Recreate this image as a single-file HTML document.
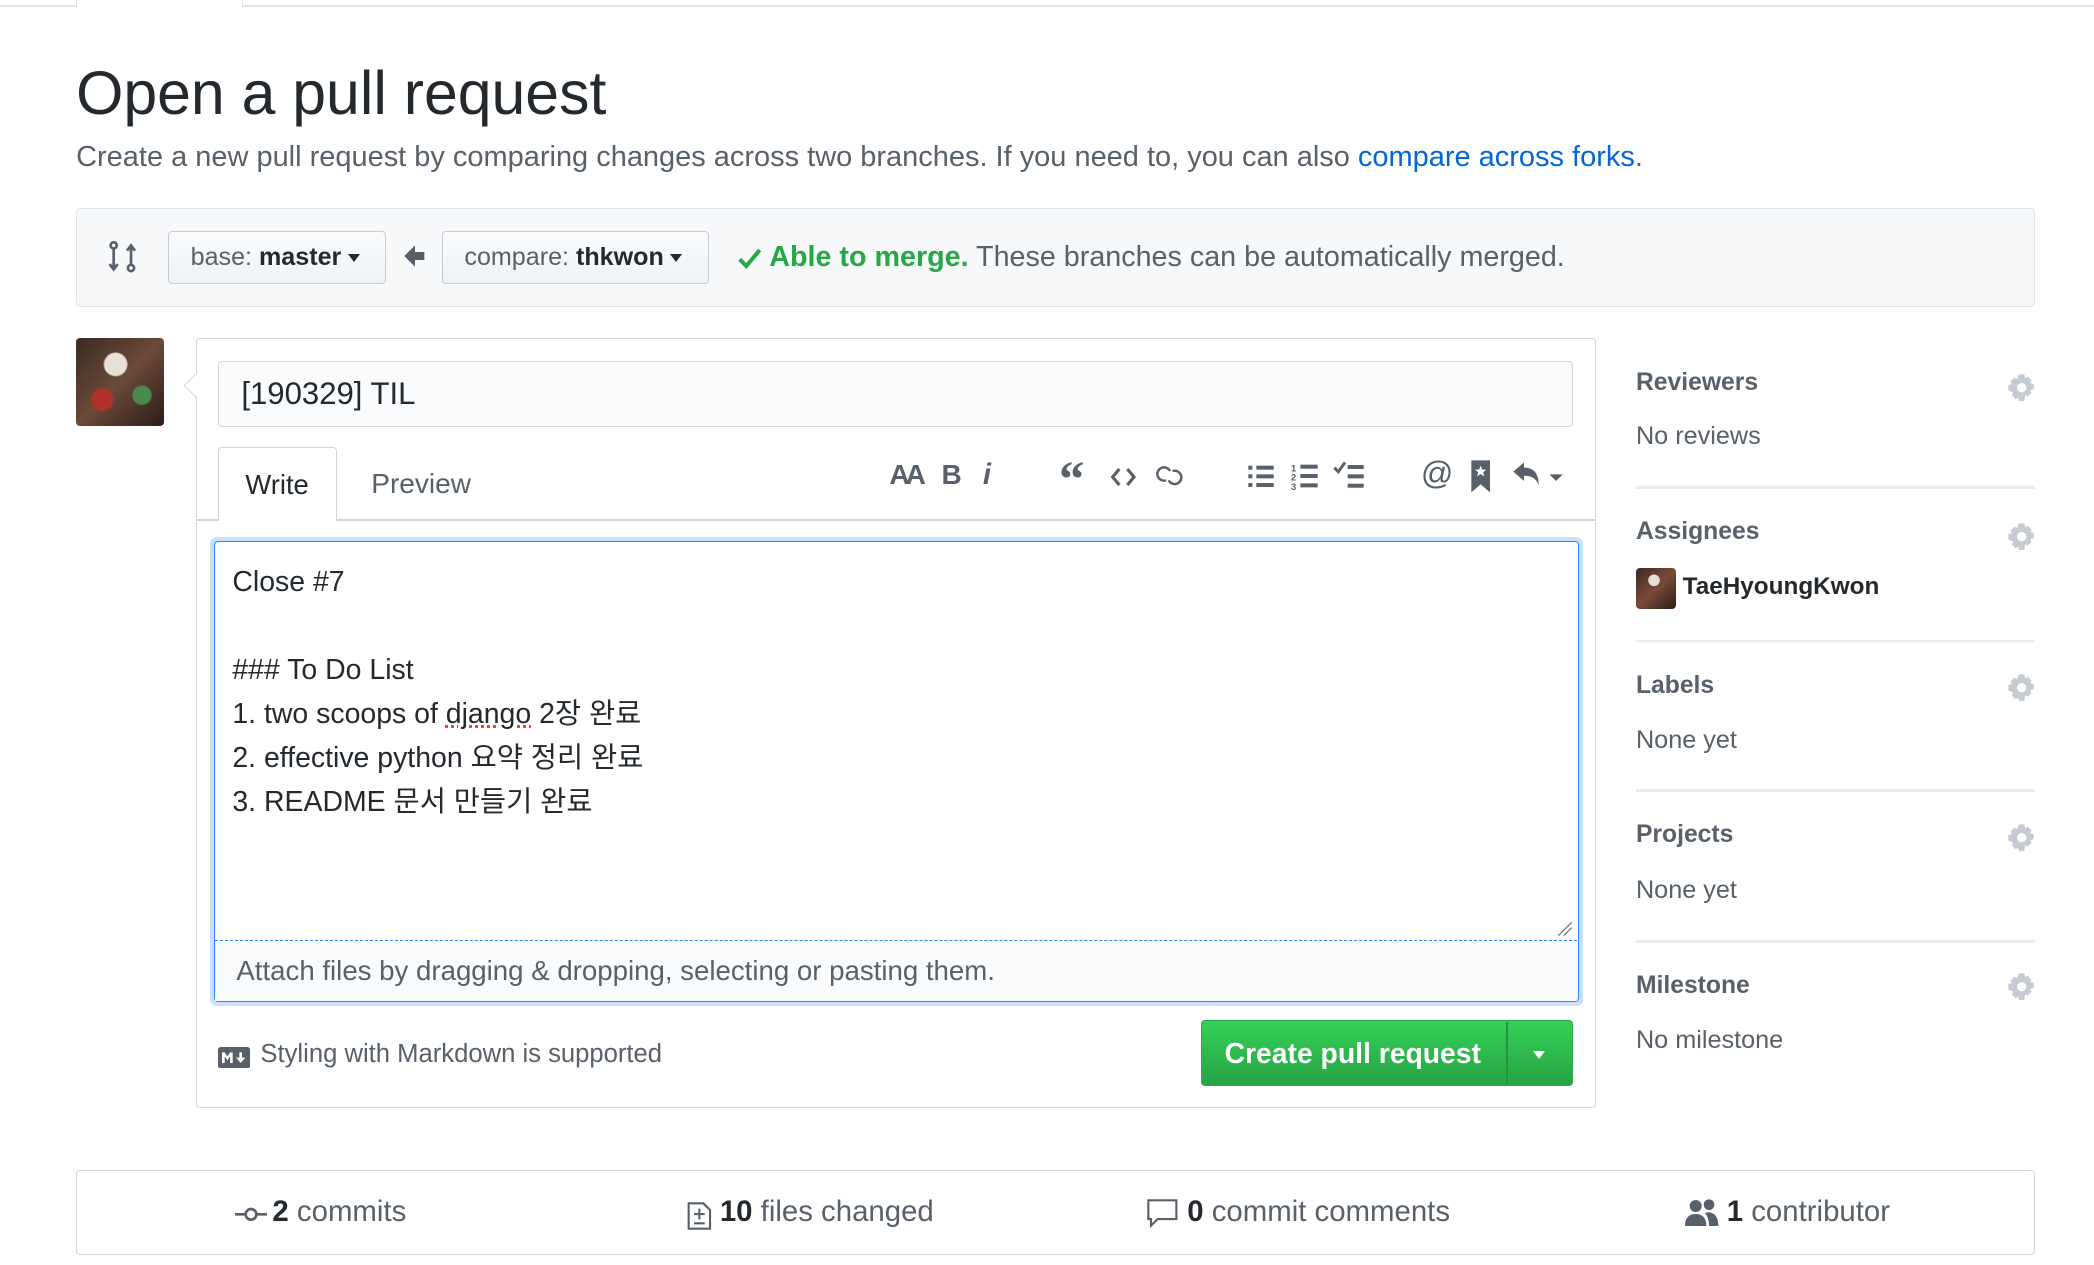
<!DOCTYPE html>
<html><head><meta charset="utf-8">
<style>
html,body{margin:0;padding:0;background:#fff;overflow:hidden}
body{width:2094px;height:1264px}
#r{position:absolute;left:0;top:0;width:1568px;height:947px;zoom:1.33546;font-family:"Liberation Sans","Noto Sans CJK KR",sans-serif;color:#24292e}
.a{position:absolute;white-space:nowrap}
.g{color:#586069}
.btn{position:absolute;background:linear-gradient(#fafbfc,#eff3f6);border:1px solid #c7ccd1;border-radius:3px;box-sizing:border-box;font-size:18.8px;color:#586069;line-height:38px;padding-left:16px}
.caret{display:inline-block;width:0;height:0;border-left:5px solid transparent;border-right:5px solid transparent;border-top:6px solid #24292e;vertical-align:middle;margin-left:5px}
.sh{position:absolute;left:1225px;font-size:18.5px;font-weight:bold;color:#586069}
.sv{position:absolute;left:1225px;font-size:18.9px;color:#586069}
.hr{position:absolute;left:1225px;width:299px;height:2px;background:#e9ecef}
.gear{position:absolute;left:1503px}
svg{position:absolute}
</style></head><body><div id="r">
<div class="a" style="left:0;top:4px;width:57px;height:1px;background:#e1e4e8"></div>
<div class="a" style="left:57px;top:-2px;width:125px;height:8px;border:1px solid #e1e4e8;border-top:none;border-bottom:none;box-sizing:border-box"></div>
<div class="a" style="left:182px;top:4px;width:1386px;height:1px;background:#e1e4e8"></div>

<div class="a" style="left:57px;top:42px;font-size:45.5px;line-height:56px;color:#24292e">Open a pull request</div>
<div class="a g" style="left:57px;top:105px;font-size:21.7px;line-height:26px">Create a new pull request by comparing changes across two branches. If you need to, you can also <span style="color:#0366d6">compare across forks</span>.</div>

<div class="a" style="left:57px;top:156px;width:1467px;height:74px;background:#f6f8fa;border:1px solid #e1e4e8;border-radius:3px;box-sizing:border-box"></div>
<svg style="left:80px;top:180px" width="24" height="26" viewBox="0 0 24 26" fill="none" stroke="#586069" stroke-width="2"><circle cx="5" cy="4" r="2.3"/><path d="M5 7v14M2 18l3 4 3-4"/><circle cx="18" cy="21" r="2.3"/><path d="M18 18V5M15 8l3-4 3 4"/></svg>
<div class="btn" style="left:126px;top:173px;width:163px;height:40px">base: <b style="color:#24292e">master</b><span class="caret"></span></div>
<svg style="left:302px;top:183px" width="18" height="18" viewBox="0 0 18 18"><path d="M1 9l8-8v5h7v6H9v5z" fill="#586069"/></svg>
<div class="btn" style="left:331px;top:173px;width:200px;height:40px">compare: <b style="color:#24292e">thkwon</b><span class="caret"></span></div>
<svg style="left:552px;top:184px" width="19" height="18" viewBox="0 0 19 18"><path d="M2 10l5 5L17 3" stroke="#28a745" stroke-width="3" fill="none"/></svg>
<div class="a" style="left:576px;top:180px;font-size:21.5px;line-height:26px;color:#586069"><b style="color:#28a745">Able to merge.</b> These branches can be automatically merged.</div>

<div class="a" style="left:57px;top:253px;width:66px;height:66px;border-radius:3px;overflow:hidden;background:radial-gradient(circle at 45% 30%,#e8e0d8 0 14%,transparent 16%),radial-gradient(circle at 30% 70%,#b0302a 0 12%,transparent 14%),radial-gradient(circle at 75% 65%,#4b8a4b 0 10%,transparent 12%),linear-gradient(135deg,#3a2a22,#6b4a38 50%,#2a1c18)"></div>

<div class="a" style="left:147px;top:253px;width:1048px;height:577px;border:1px solid #d1d5da;border-radius:3px;box-sizing:border-box;background:#fff"></div>
<div class="a" style="left:140px;top:282px;width:12px;height:12px;background:#fff;border-left:1px solid #d1d5da;border-bottom:1px solid #d1d5da;transform:rotate(45deg)"></div>
<div class="a" style="left:163px;top:270px;width:1015px;height:50px;border:1px solid #d1d5da;border-radius:3px;background:#fafbfc;box-sizing:border-box;font-size:23.3px;line-height:48px;padding-left:17px">[190329] TIL</div>
<div class="a" style="left:147px;top:389px;width:1048px;height:1px;background:#d1d5da"></div>
<div class="a" style="left:163px;top:335px;width:89px;height:55px;border:1px solid #d1d5da;border-bottom:none;border-radius:3px 3px 0 0;background:#fff;box-sizing:border-box;font-size:20.5px;line-height:56px;text-align:center">Write</div>
<div class="a g" style="left:278px;top:350px;font-size:21px;line-height:26px">Preview</div>
<div class="a" style="left:666px;top:344px;font-size:21px;font-weight:bold;color:#586069;letter-spacing:-3px">AA</div>
<div class="a" style="left:705px;top:344px;font-size:21px;font-weight:bold;color:#586069">B</div>
<div class="a" style="left:736px;top:343px;font-size:22px;font-style:italic;font-weight:bold;color:#586069">i</div>
<div class="a" style="left:793px;top:337px;font-size:38px;font-weight:bold;color:#586069;font-family:'Liberation Serif',serif">“</div>
<svg style="left:831px;top:348px" width="20" height="18" viewBox="0 0 20 18" fill="none" stroke="#586069" stroke-width="2.4"><path d="M7 3L2 9l5 6M13 3l5 6-5 6"/></svg>
<svg style="left:864px;top:347px" width="24" height="20" viewBox="0 0 24 20" fill="none" stroke="#586069" stroke-width="1.8"><path d="M9 13a5 5 0 1 1 3-7"/><path d="M14 6a5 5 0 1 1-3 7"/></svg>
<svg style="left:934px;top:347px" width="22" height="20" viewBox="0 0 22 20" fill="#586069"><rect x="1" y="2" width="3" height="3"/><rect x="7" y="2" width="13" height="3"/><rect x="1" y="8.5" width="3" height="3"/><rect x="7" y="8.5" width="13" height="3"/><rect x="1" y="15" width="3" height="3"/><rect x="7" y="15" width="13" height="3"/></svg>
<svg style="left:967px;top:346px" width="22" height="22" viewBox="0 0 22 22" fill="#586069"><text x="0" y="7" font-size="7" font-family="Liberation Sans" font-weight="bold">1</text><text x="0" y="14" font-size="7" font-family="Liberation Sans" font-weight="bold">2</text><text x="0" y="21" font-size="7" font-family="Liberation Sans" font-weight="bold">3</text><rect x="7" y="2" width="13" height="3"/><rect x="7" y="9" width="13" height="3"/><rect x="7" y="16" width="13" height="3"/></svg>
<svg style="left:998px;top:345px" width="24" height="22" viewBox="0 0 24 22" fill="#586069"><path d="M1 5l3 3 5-7" stroke="#586069" stroke-width="2.2" fill="none"/><rect x="11" y="3" width="12" height="3"/><rect x="11" y="10" width="12" height="3"/><rect x="11" y="17" width="12" height="3"/></svg>
<div class="a" style="left:1064px;top:341px;font-size:24px;color:#586069">@</div>
<svg style="left:1101px;top:344px" width="16" height="26" viewBox="0 0 16 26"><path d="M1 1h14v24l-7-6-7 6z" fill="#586069"/><path d="M8 5l1.2 3h3l-2.4 2 1 3-2.8-1.8L5.2 13l1-3L3.8 8h3z" fill="#fff"/></svg>
<svg style="left:1132px;top:345px" width="42" height="22" viewBox="0 0 42 22"><path d="M1 8l8-7v4c7 0 11 4 11 13-2-5-5-7-11-7v4z" fill="#586069"/><path d="M28 10h10l-5 5z" fill="#586069"/></svg>

<div class="a" style="left:157px;top:402px;width:1028px;height:351px;border-radius:5px;background:#c8e1ff"></div>
<div class="a" style="left:160px;top:405px;width:1022px;height:345px;border:1px solid #2188ff;border-radius:3px;box-sizing:border-box;background:#fff"></div>
<div class="a" style="left:161px;top:704px;width:1020px;height:45px;background:#fafbfc;border-top:1px dashed #2188ff"></div>
<div class="a" style="left:174px;top:419px;font-size:21.3px;line-height:33px;white-space:pre">Close #7

### To Do List
1. two scoops of <span style="text-decoration:underline dotted #e53935">django</span> 2장 완료
2. effective python 요약 정리 완료
3. README 문서 만들기 완료</div>
<svg style="left:1166px;top:690px" width="12" height="12" viewBox="0 0 12 12" stroke="#777" stroke-width="1"><path d="M1 11L11 1M5 11l6-6"/></svg>
<div class="a g" style="left:177px;top:715px;font-size:20.7px;line-height:24px">Attach files by dragging &amp; dropping, selecting or pasting them.</div>

<svg style="left:163px;top:784px" width="24" height="16" viewBox="0 0 24 16"><rect width="24" height="16" rx="2" fill="#586069"/><path d="M3 12V4h2l2 3 2-3h2v8H9V7l-2 3-2-3v5zM16 4h2v4h2.5l-3.5 4-3.5-4H16z" fill="#fff"/></svg>
<div class="a g" style="left:195px;top:779px;font-size:19.2px;line-height:22px">Styling with Markdown is supported</div>
<div class="a" style="left:899px;top:764px;width:279px;height:49px;border:1px solid #28a745;border-radius:3px;box-sizing:border-box;background:linear-gradient(#34d058,#28a745 90%)"></div>
<div class="a" style="left:1128px;top:765px;width:1px;height:47px;background:#24943e"></div>
<div class="a" style="left:917px;top:776px;font-size:21.2px;font-weight:bold;color:#fff;line-height:26px">Create pull request</div>
<div class="a" style="left:1148px;top:787px;width:0;height:0;border-left:5px solid transparent;border-right:5px solid transparent;border-top:6px solid #fff"></div>

<div class="sh" style="top:276px">Reviewers</div>
<div class="sv" style="top:316px">No reviews</div>
<div class="hr" style="top:364px"></div>
<div class="sh" style="top:388px">Assignees</div>
<div class="a" style="left:1225px;top:425px;width:30px;height:31px;border-radius:3px;background:radial-gradient(circle at 45% 30%,#e8e0d8 0 15%,transparent 17%),linear-gradient(135deg,#3a2a22,#7b4a38 50%,#2a1c18)"></div>
<div class="a" style="left:1260px;top:429px;font-size:18.2px;font-weight:bold;color:#24292e">TaeHyoungKwon</div>
<div class="hr" style="top:479px"></div>
<div class="sh" style="top:503px">Labels</div>
<div class="sv" style="top:544px">None yet</div>
<div class="hr" style="top:591px"></div>
<div class="sh" style="top:615px">Projects</div>
<div class="sv" style="top:656px">None yet</div>
<div class="hr" style="top:704px"></div>
<div class="sh" style="top:728px">Milestone</div>
<div class="sv" style="top:768px">No milestone</div>
<svg class="gear" style="top:279px" width="22" height="22" viewBox="0 0 22 22"><path d="M9 1h4l.6 2.8 2-1 2.8 2.8-1 2 2.6.6v4l-2.6.6 1 2-2.8 2.8-2-1L13 21H9l-.6-2.4-2 1-2.8-2.8 1-2L1 13V9l2.6-.6-1-2 2.8-2.8 2 1z" fill="#c6cbd1"/><circle cx="11" cy="11" r="3.5" fill="#fff"/></svg>
<svg class="gear" style="top:391px" width="22" height="22" viewBox="0 0 22 22"><path d="M9 1h4l.6 2.8 2-1 2.8 2.8-1 2 2.6.6v4l-2.6.6 1 2-2.8 2.8-2-1L13 21H9l-.6-2.4-2 1-2.8-2.8 1-2L1 13V9l2.6-.6-1-2 2.8-2.8 2 1z" fill="#c6cbd1"/><circle cx="11" cy="11" r="3.5" fill="#fff"/></svg>
<svg class="gear" style="top:504px" width="22" height="22" viewBox="0 0 22 22"><path d="M9 1h4l.6 2.8 2-1 2.8 2.8-1 2 2.6.6v4l-2.6.6 1 2-2.8 2.8-2-1L13 21H9l-.6-2.4-2 1-2.8-2.8 1-2L1 13V9l2.6-.6-1-2 2.8-2.8 2 1z" fill="#c6cbd1"/><circle cx="11" cy="11" r="3.5" fill="#fff"/></svg>
<svg class="gear" style="top:616px" width="22" height="22" viewBox="0 0 22 22"><path d="M9 1h4l.6 2.8 2-1 2.8 2.8-1 2 2.6.6v4l-2.6.6 1 2-2.8 2.8-2-1L13 21H9l-.6-2.4-2 1-2.8-2.8 1-2L1 13V9l2.6-.6-1-2 2.8-2.8 2 1z" fill="#c6cbd1"/><circle cx="11" cy="11" r="3.5" fill="#fff"/></svg>
<svg class="gear" style="top:728px" width="22" height="22" viewBox="0 0 22 22"><path d="M9 1h4l.6 2.8 2-1 2.8 2.8-1 2 2.6.6v4l-2.6.6 1 2-2.8 2.8-2-1L13 21H9l-.6-2.4-2 1-2.8-2.8 1-2L1 13V9l2.6-.6-1-2 2.8-2.8 2 1z" fill="#c6cbd1"/><circle cx="11" cy="11" r="3.5" fill="#fff"/></svg>

<div class="a" style="left:57px;top:876px;width:1467px;height:64px;border:1px solid #d1d5da;border-radius:3px;box-sizing:border-box"></div>
<svg style="left:176px;top:902px" width="24" height="14" viewBox="0 0 24 14" fill="none" stroke="#586069" stroke-width="2"><circle cx="12" cy="7" r="4"/><path d="M0 7h8M16 7h8"/></svg>
<div class="a" style="left:204px;top:895px;font-size:22px;line-height:26px;color:#586069"><b style="color:#24292e">2</b> commits</div>
<svg style="left:514px;top:897px" width="20" height="25" viewBox="0 0 20 25" fill="none" stroke="#586069" stroke-width="1.6"><path d="M2 4h11l5 5v14H2z"/><path d="M10 8v8M6 12h8M6 19h8"/></svg>
<div class="a" style="left:539px;top:895px;font-size:22px;line-height:26px;color:#586069"><b style="color:#24292e">10</b> files changed</div>
<svg style="left:859px;top:898px" width="23" height="22" viewBox="0 0 23 22" fill="none" stroke="#586069" stroke-width="1.6"><path d="M1 1h21v14H8l-5 5v-5H1z"/></svg>
<div class="a" style="left:889px;top:895px;font-size:22px;line-height:26px;color:#586069"><b style="color:#24292e">0</b> commit comments</div>
<svg style="left:1262px;top:897px" width="26" height="22" viewBox="0 0 26 22" fill="#586069"><circle cx="8" cy="6" r="4.5"/><path d="M0 21c0-6 3-9 8-9s8 3 8 9z"/><circle cx="18" cy="5" r="4"/><path d="M15 11c5-1 10 1 10 10h-7c0-4-1-7-3-10z"/></svg>
<div class="a" style="left:1293px;top:895px;font-size:22px;line-height:26px;color:#586069"><b style="color:#24292e">1</b> contributor</div>
</div></body></html>
